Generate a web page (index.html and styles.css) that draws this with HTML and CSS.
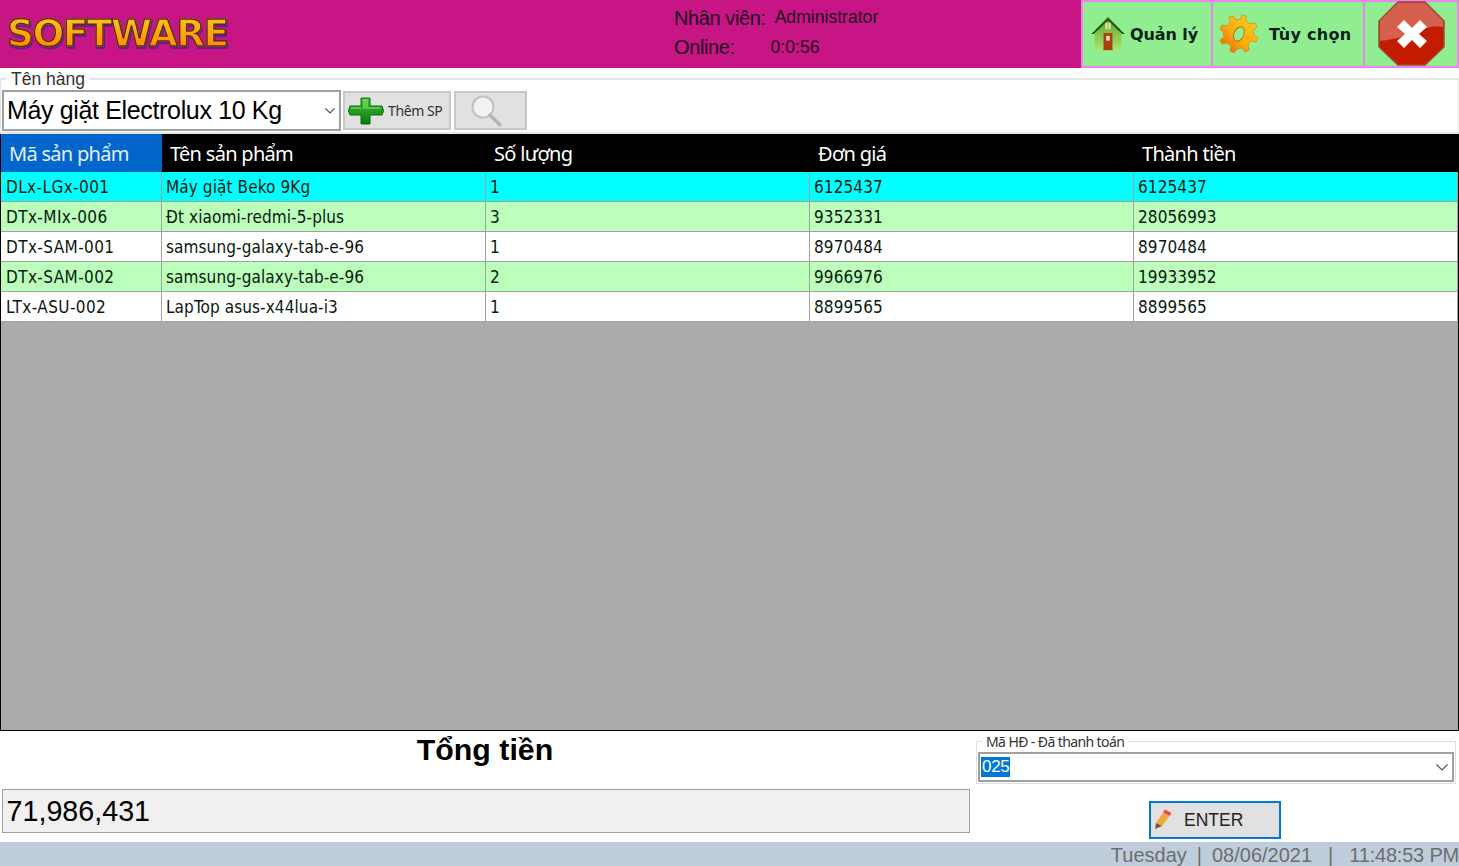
FILE: index.html
```html
<!DOCTYPE html>
<html lang="en">
<head>
    <meta charset="UTF-8">
    <title>Software</title>
    <link rel="stylesheet" href="styles.css">
</head>
<body>
    <svg class="defs" width="0" height="0">
        <defs>
            <linearGradient id="roof" x1="0" y1="0" x2="0" y2="1"><stop offset="0" stop-color="#2f6a10"/><stop offset="1" stop-color="#163c08"/></linearGradient>
            <linearGradient id="wall" x1="0" y1="0" x2="0" y2="1"><stop offset="0" stop-color="#5fa82a"/><stop offset="1" stop-color="#a6e870"/></linearGradient>
            <linearGradient id="cog" x1="1" y1="0" x2="0" y2="1"><stop offset="0" stop-color="#ffd21e"/><stop offset="0.55" stop-color="#fbae10"/><stop offset="1" stop-color="#e8560a"/></linearGradient>
            <linearGradient id="plus" x1="0" y1="0" x2="0" y2="1"><stop offset="0" stop-color="#3fc02f"/><stop offset="1" stop-color="#0c7a14"/></linearGradient>
        </defs>
    </svg>

    <header class="topbar">
        <div class="logo">SOFTWARE</div>
        <div class="staff">
            <div class="staff-row"><span class="staff-label">Nhân viên:</span><span class="staff-name">Administrator</span></div>
            <div class="staff-row"><span class="staff-label">Online:</span><span class="staff-time">0:0:56</span></div>
        </div>
        <div class="topbtn topbtn-manage">
            <svg width="34" height="38" viewBox="0 0 38 40" preserveAspectRatio="none">
                <path d="M4 19 19 5 34 19V37H4Z" fill="url(#wall)"/>
                <path d="M0.5 20 19 2 37.5 20 35 20 19 6 3 20Z" fill="url(#roof)"/>
                <rect x="16" y="8" width="2.5" height="7" fill="#f0d8b0"/>
                <rect x="19.5" y="8" width="2.5" height="7" fill="#f0d8b0"/>
                <rect x="14" y="19" width="10" height="18" fill="#a8410c"/>
                <rect x="17" y="22" width="4" height="5" fill="#f3e3c8"/>
            </svg>
            <span>Quản lý</span>
        </div>
        <div class="topbtn topbtn-options">
            <svg width="40" height="40" viewBox="0 0 40 40">
                <g fill="url(#cog)" stroke="#d9750a" stroke-width="0.6">
                    <path d="M23 1l4 1 0 5 4 3 5-1 2 4-4 3 1 5 4 3-2 4-5-1-3 4 1 5-4 2-3-4-5 1-3 4-4-2 1-5-4-3-5 1-2-4 4-3-1-5-3-3 2-4 5 1 3-4-1-5 4-1 3 4 5-1Z"/>
                </g>
                <ellipse cx="20" cy="20" rx="5" ry="7.5" transform="rotate(25 20 20)" fill="#91ee91" stroke="#c96a08"/>
            </svg>
            <span>Tùy chọn</span>
        </div>
        <div class="topbtn topbtn-close">
            <svg width="68" height="66" viewBox="0 0 68 66">
                <path d="M20 1H47L66 20V46L47 64H20L1 46V20Z" fill="#c21c00" stroke="#9c4a3c" stroke-width="1.5"/>
                <path d="M20 2H47L65 20V26C48 22 40 36 2 40V20Z" fill="#fff" opacity="0.3"/>
                <path d="M26 19 34 27 42 19 49 26 41 33 49 40 42 47 34 39 26 47 19 40 27 33 19 26Z" fill="#fff"/>
            </svg>
        </div>
    </header>

    <fieldset class="product-box">
        <legend>Tên hàng</legend>
        <div class="select select-big">
            <span>Máy giặt Electrolux 10 Kg</span>
            <svg class="chev" width="10" height="6" viewBox="0 0 10 6"><path d="M0.5 0.5 5 5 9.5 0.5" fill="none" stroke="#555" stroke-width="1.2"/></svg>
        </div>
        <div class="btn btn-add">
            <svg width="38" height="30" viewBox="0 0 38 30">
                <path d="M14 2H23V10H35Q38 15 35 19H23V28H14V19H3Q0 15 3 10H14Z" fill="url(#plus)" stroke="#0a6a10"/>
                <path d="M16 3H21V11H33V13H16ZM4 11H14V13H4Z" fill="#7fe06a" opacity="0.6"/>
            </svg>
            <span>Thêm SP</span>
        </div>
        <div class="btn btn-search">
            <svg width="34" height="34" viewBox="0 0 34 34">
                <circle cx="14" cy="13" r="10.5" fill="#f2f2f2" stroke="#c2c2c2" stroke-width="2"/>
                <path d="M21 21 31 31" stroke="#b5b5b5" stroke-width="3.5" stroke-linecap="round"/>
            </svg>
        </div>
    </fieldset>

    <main class="grid">
        <div class="grid-head">
            <div class="head-cell head-active">Mã sản phẩm</div>
            <div class="head-cell">Tên sản phẩm</div>
            <div class="head-cell">Số lượng</div>
            <div class="head-cell">Đơn giá</div>
            <div class="head-cell">Thành tiền</div>
        </div>
        <div class="row row-selected">
            <div class="cell">DLx-LGx-001</div><div class="cell">Máy giặt Beko 9Kg</div><div class="cell">1</div><div class="cell">6125437</div><div class="cell">6125437</div>
        </div>
        <div class="row row-alt">
            <div class="cell">DTx-MIx-006</div><div class="cell">Đt xiaomi-redmi-5-plus</div><div class="cell">3</div><div class="cell">9352331</div><div class="cell">28056993</div>
        </div>
        <div class="row">
            <div class="cell">DTx-SAM-001</div><div class="cell">samsung-galaxy-tab-e-96</div><div class="cell">1</div><div class="cell">8970484</div><div class="cell">8970484</div>
        </div>
        <div class="row row-alt">
            <div class="cell">DTx-SAM-002</div><div class="cell">samsung-galaxy-tab-e-96</div><div class="cell">2</div><div class="cell">9966976</div><div class="cell">19933952</div>
        </div>
        <div class="row">
            <div class="cell">LTx-ASU-002</div><div class="cell">LapTop asus-x44lua-i3</div><div class="cell">1</div><div class="cell">8899565</div><div class="cell">8899565</div>
        </div>
    </main>

    <section class="bottom">
        <div class="total">
            <div class="total-title">Tổng tiền</div>
            <div class="total-value">71,986,431</div>
        </div>
        <div class="invoice">
            <fieldset class="invoice-box">
                <legend>Mã HĐ - Đã thanh toán</legend>
                <div class="select select-small">
                    <span class="selected-text">025</span>
                    <svg class="chev" width="12" height="7" viewBox="0 0 12 7"><path d="M0.5 0.5 6 6 11.500 0.5" fill="none" stroke="#555" stroke-width="1.2"/></svg>
                </div>
            </fieldset>
            <div class="enter">
                <svg width="18" height="22" viewBox="0 0 18 22">
                    <path d="M11 0.500 17.500 4 15.500 7 9 3.500Z" fill="#e8484a"/>
                    <path d="M9 3.500 15.500 7 8 17 2 14Z" fill="#f2a93b"/>
                    <path d="M2 14 8 17 1 20Z" fill="#6b5a48"/>
                </svg>
                <span>ENTER</span>
            </div>
        </div>
    </section>

    <footer class="status">
        <span>Tuesday</span><span>|</span><span>08/06/2021</span><span class="sep">|</span><span class="status-time">11:48:53 PM</span>
    </footer>
</body>
</html>
```

FILE: styles.css
```css
* {
    box-sizing: border-box;
}
html, body {
    margin: 0;
    height: 866px;
    overflow: hidden;
}
body {
    display: flex;
    flex-direction: column;
    background-color: #fff;
    font-family: "Liberation Sans", Arial, sans-serif;
    color: #000;
}
.defs {
    position: absolute;
}

/* top bar */
.topbar {
    display: flex;
    height: 68px;
    flex: none;
    background-color: #c71585;
}
.logo {
    width: 674px;
    padding: 13px 0 0 7px;
    font-family: "DejaVu Sans", sans-serif;
    font-size: 37.500px;
    font-weight: bold;
    letter-spacing: -1.6px;
    line-height: 40px;
    background: linear-gradient(#ffc21c 25%, #ff8400 75%);
    -webkit-background-clip: text;
    background-clip: text;
    color: transparent;
    -webkit-text-stroke: 1.5px #5a2a1a;
    filter: drop-shadow(1px 2px 0 #6a1a96);
}
.staff {
    width: 407px;
    flex: none;
    color: #1c0a1a;
}
.staff-row {
    display: flex;
}
.staff-row:first-child {
    height: 35px;
    padding-top: 7px;
}
.staff-row:last-child {
    padding-top: 1px;
}
.staff-label {
    font-size: 20px;
    letter-spacing: -0.4px;
}
.staff-name {
    margin-left: 9px;
    font-size: 17.600px;
}
.staff-time {
    margin: 1px 0 0 36px;
    font-size: 17.600px;
}
.topbtn {
    display: flex;
    align-items: center;
    height: 68px;
    background-color: #90ee90;
    border: 2px solid #ee82ee;
    border-right: 0;
    font-family: "DejaVu Sans", sans-serif;
    font-size: 16px;
    font-weight: bold;
    letter-spacing: -0.1px;
    color: #06201a;
}
.topbtn-manage {
    width: 130px;
    padding-left: 8px;
    gap: 5px;
}
.topbtn-options {
    width: 152px;
    padding-left: 6px;
    gap: 10px;
    letter-spacing: 0.3px;
}
.topbtn-close {
    flex: 1;
    padding-left: 13px;
    border-right: 2px solid #ee82ee;
}

/* product picker */
.product-box {
    display: flex;
    flex: none;
    gap: 2px;
    height: 64px;
    margin: 2px 0 0;
    padding: 2px 0 0 1px;
    border: 2px solid #e6e6e6;
    border-right-width: 1px;
    border-left-width: 1px;
}
.product-box legend {
    margin-left: 5px;
    padding: 0 4px;
    font-size: 17.500px;
    line-height: 18px;
    color: #333;
}
.select {
    display: flex;
    align-items: center;
    justify-content: space-between;
    background-color: #fff;
    border: 2px solid #a0a0a0;
}
.select-big {
    width: 339px;
    height: 41px;
    padding: 0 4px 0 3px;
    font-size: 25px;
    letter-spacing: -0.35px;
}
.btn {
    display: flex;
    align-items: center;
    height: 39px;
    margin-top: 1px;
    background-color: #e1e1e1;
    border: 2px solid #c8c8c8;
}
.btn-add {
    width: 108px;
    padding-left: 2px;
    font-family: "Noto Sans", sans-serif;
    font-size: 14px;
    color: #333;
    letter-spacing: -0.4px;
}
.btn-add span {
    margin-left: 3px;
}
.btn-search {
    width: 73px;
    margin-left: 1px;
    justify-content: center;
    padding-right: 9px;
}

/* data grid */
.grid {
    flex: 1;
    display: flex;
    flex-direction: column;
    background-color: #ababab;
    border: 1px solid #000;
    border-top: 0;
}
.grid-head, .row {
    display: grid;
    grid-template-columns: 161px 324px 324px 324px 1fr;
}
.grid-head {
    height: 38px;
    background-color: #000;
    color: #fff;
}
.head-cell {
    padding-left: 8px;
    font-family: "Noto Sans", sans-serif;
    font-size: 20px;
    line-height: 39px;
    letter-spacing: -0.7px;
}
.head-active {
    background-color: #0066cc;
    color: #e6eefa;
}
.row {
    height: 30px;
    background-color: #fff;
    border-bottom: 1px solid #a0a0a0;
}
.row-selected {
    background-color: #0ff;
}
.row-alt {
    background-color: #bbffbb;
}
.cell {
    padding: 1px 0 0 4px;
    font-family: "DejaVu Sans", sans-serif;
    font-stretch: condensed;
    font-size: 17px;
    line-height: 28px;
    letter-spacing: 0.1px;
    border-right: 1px solid #a0a0a0;
    color: #0a1a10;
    white-space: nowrap;
}
.cell:first-child {
    padding-left: 5px;
    letter-spacing: 0.4px;
}

/* totals */
.bottom {
    display: flex;
    flex: none;
    height: 111px;
}
.total {
    width: 975px;
    padding: 0 5px 0 2px;
}
.total-title {
    height: 58px;
    padding: 2px 2px 0 0;
    font-size: 30.300px;
    font-weight: bold;
    line-height: 34px;
    text-align: center;
}
.total-value {
    height: 44px;
    padding-left: 3.500px;
    background-color: #f0f0f0;
    border: 1.500px solid #a0a0a0;
    font-size: 28.700px;
    line-height: 42px;
}
.invoice {
    flex: 1;
}
.invoice-box {
    height: 50px;
    margin: 3px 3px 0 1px;
    padding: 3px 0 0 1px;
    border: 1px solid #e0e0e0;
}
.invoice-box legend {
    margin-left: 4px;
    padding: 0 4px;
    font-family: "Noto Sans", sans-serif;
    font-size: 14px;
    line-height: 15px;
    letter-spacing: -0.6px;
    color: #333;
}
.select-small {
    height: 30px;
    padding: 0 4px 0 1px;
    margin-right: 1px;
}
.selected-text {
    padding: 0 1px;
    background-color: #0078d7;
    color: #fff;
    font-size: 17px;
    line-height: 20px;
    letter-spacing: -0.3px;
}
.enter {
    display: flex;
    align-items: center;
    gap: 12px;
    width: 132px;
    height: 38px;
    margin: 17px 0 0 174px;
    padding-left: 3px;
    background-color: #e1e1e1;
    border: 2px solid #0078d7;
    font-size: 17.500px;
    color: #222;
}

/* status bar */
.status {
    display: flex;
    justify-content: flex-end;
    flex: none;
    gap: 10px;
    height: 24px;
    background-color: #bfcddb;
    color: #6e6e6e;
    font-size: 20px;
    line-height: 27px;
    white-space: nowrap;
}
.status .sep {
    margin: 0 6px;
}
.status-time {
    letter-spacing: -0.2px;
}
```
